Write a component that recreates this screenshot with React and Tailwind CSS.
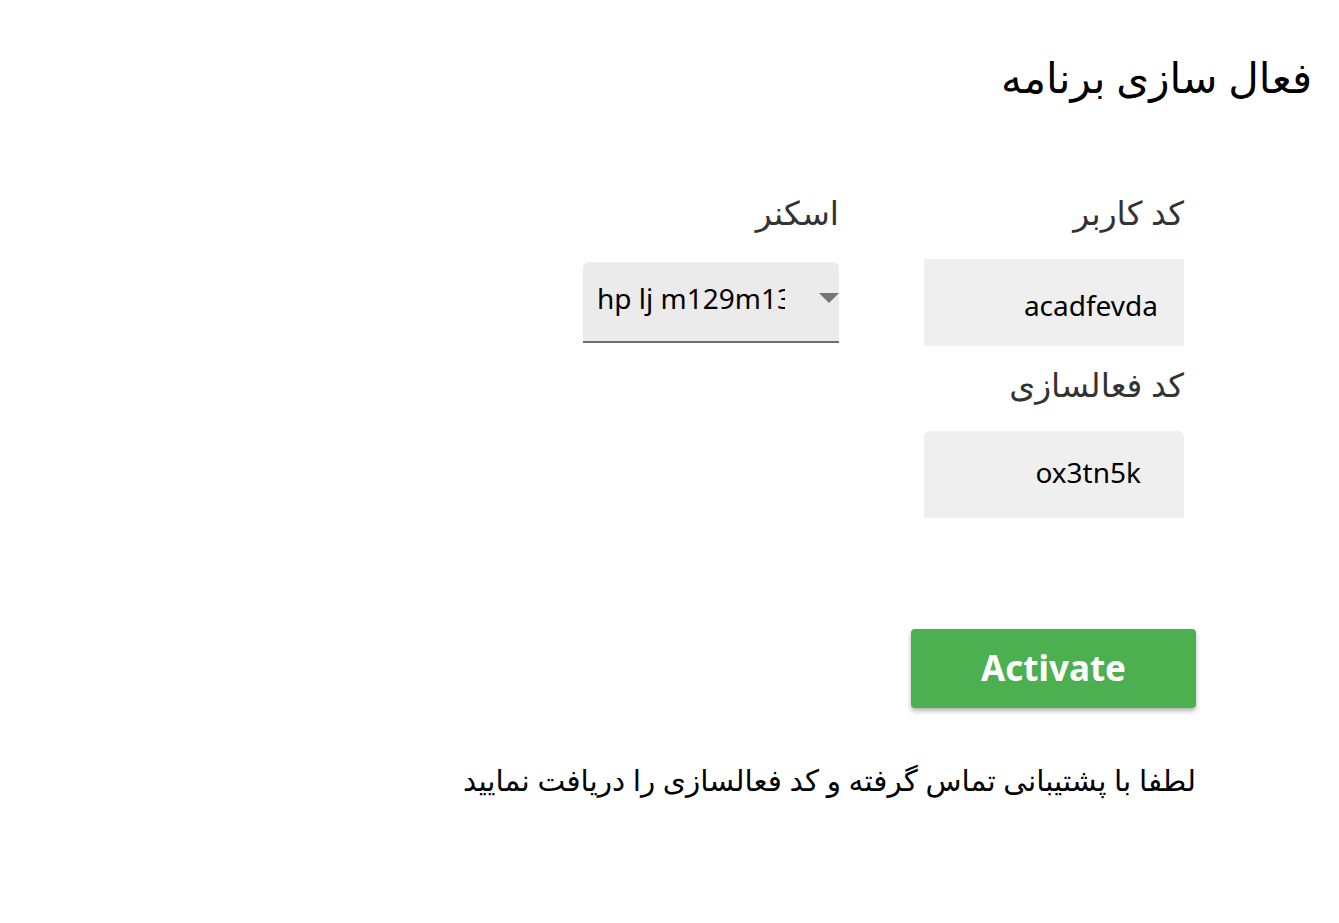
import React from "react";

const font = { fontFamily: '"Noto Sans", "DejaVu Sans", sans-serif' };

const App = () => {
  return (
    <div dir="rtl" className="min-h-screen bg-white text-black" style={font}>
      {/* title */}
      <div className="pt-[50px] pr-[27px]">
        <h1 className="text-[42px] leading-[54px] font-normal">فعال سازی برنامه</h1>
      </div>

      <div className="mr-[143px]">
        {/* form */}
        <div className="flex gap-[85px] pr-[12px] mt-[88px]">
          <div className="w-[260px] flex flex-col">
            <label className="text-[33px] leading-[42px] text-[#333]">کد کاربر</label>
            <div className="mt-[25px] h-[87px] bg-[#efefef] flex items-center pr-[26px] pt-[4px]">
              <span dir="ltr" className="text-[28px] text-black">acadfevda</span>
            </div>
            <label className="mt-[18px] text-[33px] leading-[42px] text-[#333]">کد فعالسازی</label>
            <div className="mt-[25px] h-[87px] bg-[#efefef] rounded-t-md flex items-center pr-[43px] pb-[6px]">
              <span dir="ltr" className="text-[28px] text-black">ox3tn5k</span>
            </div>
          </div>

          <div className="w-[256px] flex flex-col">
            <label className="text-[33px] leading-[42px] text-[#333]">اسکنر</label>
            <div
              dir="ltr"
              className="mt-[28px] h-[81px] bg-[#ebebeb] rounded-t-md border-b-2 border-[#6f6f6f] flex items-center pl-[14px] pb-[8px]"
            >
              <span className="w-[188px] overflow-hidden whitespace-nowrap text-[28px] text-black">hp lj m129m13</span>
              <svg className="ml-auto mr-0" width="20" height="10" viewBox="0 0 20 10">
                <path d="M0 0 L20 0 L10 10 Z" fill="#757575" />
              </svg>
            </div>
          </div>
        </div>

        {/* button */}
        <button className="mt-[111px] w-[285px] h-[79px] bg-[#4caf50] rounded-[4px] shadow-[0_3px_5px_rgba(0,0,0,0.3)] text-white text-[35px] font-bold">
          Activate
        </button>

        <p className="mt-[52px] text-[29.5px] leading-[39px] text-black">
          لطفا با پشتیبانی تماس گرفته و کد فعالسازی را دریافت نمایید
        </p>
      </div>
    </div>
  );
};

export default App;
